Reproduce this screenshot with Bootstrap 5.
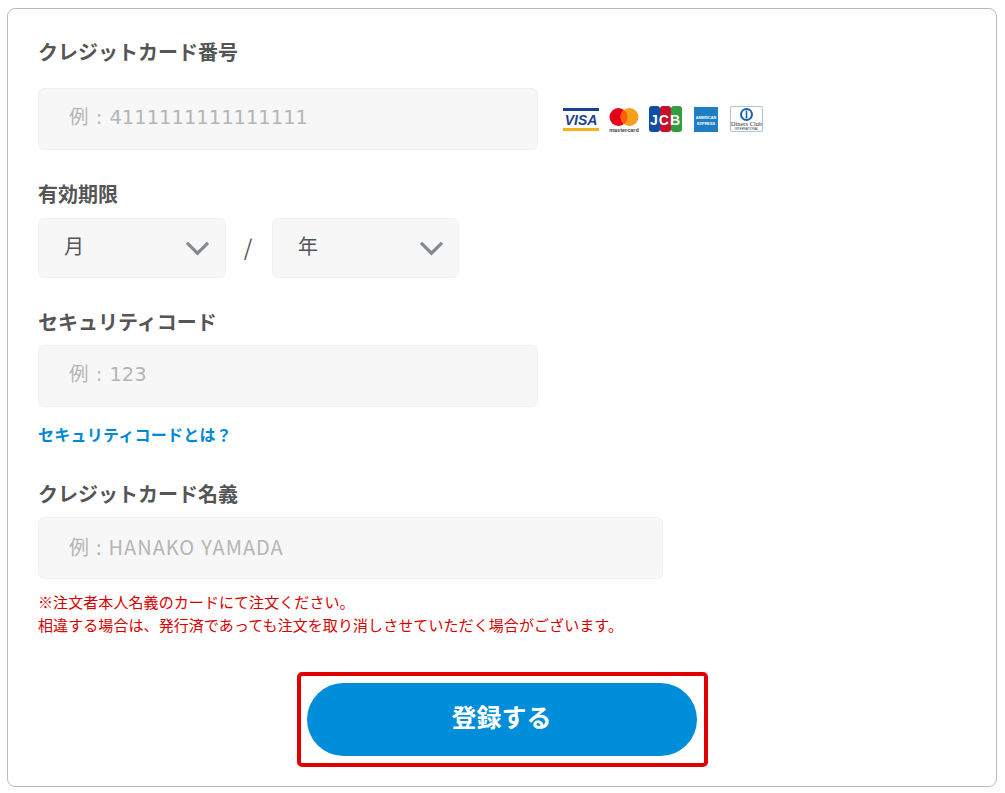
<!DOCTYPE html>
<html lang="ja">
<head>
  <meta charset="UTF-8">
  <title>クレジットカード登録</title>
  <link href="https://cdn.jsdelivr.net/npm/bootstrap@5.3.3/dist/css/bootstrap.min.css" rel="stylesheet">
  <style>
    body { background: #fff; font-family: "Noto Sans CJK JP", "Noto Sans", sans-serif; color: #555; }
    .pay-box { margin: 8px 8px 0 7px; width: 990px; height: 779px; border: 1px solid #bbb; border-radius: 8px; padding: 29px 30px 0; }
    .pay-label { font-size: 20px; font-weight: 700; color: #555; line-height: 28px; margin: 0; }
    .pay-input.form-control { background: #f7f7f7; border: 1px solid #f1f1f1; border-radius: 6px; height: 62px; padding: 0 30px 4px; font-size: 20px; letter-spacing: 1px; word-spacing: .5px; box-shadow: none; }
    .pay-input.form-control::placeholder { color: #b5b5b5; }
    .pay-input.num-field { font-family: "DejaVu Sans", "Noto Sans CJK JP", sans-serif; font-size: 19.5px; letter-spacing: 0; word-spacing: 1px; padding-bottom: 4px; }
    .w-short { width: 500px; }
    .w-long { width: 625px; }
    .pay-select.form-select { background-color: #f7f7f7; background-image: url("data:image/svg+xml,%3csvg xmlns='http://www.w3.org/2000/svg' viewBox='0 0 22 14'%3e%3cpath fill='none' stroke='%23808a90' stroke-width='3' d='M1 1.5l10 10 10-10'/%3e%3c/svg%3e"); background-size: 23px 15px; background-position: right 16px center; border: 1px solid #f1f1f1; border-radius: 6px; height: 60px; width: 188px; padding: 0 0 4px 25px; font-size: 20px; color: #555; box-shadow: none; }
    .pay-select.year-field { width: 187px; background-position: right 15px center; }
    .slash { width: 46px; font-size: 22px; line-height: 1; color: #555; text-align: center; padding-bottom: 4px; margin-left: -1px; margin-right: 1px; }
    .cards { margin-left: 25px; gap: 10px; }
    .cards .wide-gap { margin-left: 2px; }
    .help-link { font-size: 16px; font-weight: 700; color: #0088d4; text-decoration: none; line-height: 24px; letter-spacing: .25px; }
    .notes { font-size: 15px; line-height: 23px; color: #d60000; margin: 11px 0 0; letter-spacing: .08px; }
    .cta-frame { width: 411px; height: 95px; border: 4px solid #e00000; border-radius: 5px; padding: 7px 6px; margin: 36px auto 0; }
    .cta-btn { width: 390px; height: 73px; border: 0; border-radius: 37px; background: #008dd9; color: #fff; font-size: 25px; font-weight: 700; padding: 0 0 5px; }
    .cta-btn:hover { background: #008dd9; color: #fff; }
  </style>
</head>
<body>

<div class="pay-box">
  <p class="pay-label">クレジットカード番号</p>
  <div class="d-flex align-items-center" style="margin-top:22px">
    <input type="text" class="form-control pay-input num-field w-short" placeholder="例 : 4111111111111111">
    <div class="d-flex align-items-center cards">
      <svg width="36" height="24" viewBox="0 0 36 24">
        <rect y="1" width="36" height="3" fill="#1a3f8f"/>
        <rect y="21" width="36" height="3" fill="#f3b31c"/>
        <text x="18" y="17.500" text-anchor="middle" font-family="Liberation Sans" font-weight="700" font-style="italic" font-size="14" fill="#1a3f8f">VISA</text>
      </svg>
      <svg width="30" height="26" viewBox="0 0 30 26">
        <circle cx="9.500" cy="11" r="9" fill="#e3001b"/>
        <circle cx="20.500" cy="11" r="9" fill="#f79e1b"/>
        <path d="M15 3.900a9 9 0 0 1 0 14.200a9 9 0 0 1 0-14.200z" fill="#ff5f00"/>
        <text x="15" y="25.500" text-anchor="middle" font-family="Liberation Sans" font-weight="700" font-size="5.500" fill="#444">mastercard</text>
      </svg>
      <svg width="33" height="26" viewBox="0 0 33 26">
        <rect x="0" width="11" height="26" rx="3" fill="#0b4ea2"/>
        <rect x="11" width="11" height="26" rx="3" fill="#c8102e"/>
        <rect x="22" width="11" height="26" rx="3" fill="#2e9e3f"/>
        <text x="16.500" y="19" text-anchor="middle" font-family="Liberation Sans" font-weight="700" font-size="14" fill="#fff" letter-spacing="1">JCB</text>
      </svg>
      <svg class="wide-gap" width="24" height="25" viewBox="0 0 24 25">
        <rect width="24" height="25" fill="#1f7fc4"/>
        <text x="12" y="11.500" text-anchor="middle" font-family="Liberation Sans" font-weight="700" font-size="3.800" fill="#fff">AMERICAN</text>
        <text x="12" y="17.500" text-anchor="middle" font-family="Liberation Sans" font-weight="700" font-size="3.800" fill="#fff">EXPRESS</text>
      </svg>
      <svg class="wide-gap" width="33" height="26" viewBox="0 0 33 26">
        <rect x=".5" y=".5" width="32" height="25" rx="1.500" fill="#fff" stroke="#a9c4dc"/>
        <circle cx="16.500" cy="8.500" r="6.500" fill="#1b5fa8"/>
        <circle cx="16.500" cy="8.500" r="4.500" fill="#fff"/>
        <rect x="15.700" y="4.500" width="1.600" height="8" fill="#1b5fa8"/>
        <text x="16.500" y="20" text-anchor="middle" font-family="Liberation Serif" font-size="6.500" fill="#333">Diners Club</text>
        <text x="16.500" y="24" text-anchor="middle" font-family="Liberation Sans" font-size="3" fill="#333">INTERNATIONAL</text>
      </svg>
    </div>
  </div>

  <p class="pay-label" style="margin-top:30px">有効期限</p>
  <div class="d-flex align-items-center" style="margin-top:10px">
    <select class="form-select pay-select"><option>月</option></select>
    <span class="slash">/</span>
    <select class="form-select pay-select year-field"><option>年</option></select>
  </div>

  <p class="pay-label" style="margin-top:30px">セキュリティコード</p>
  <input type="text" class="form-control pay-input num-field w-short" style="margin-top:9px" placeholder="例 : 123">
  <a href="#" class="help-link d-block" style="margin-top:15px">セキュリティコードとは？</a>

  <p class="pay-label" style="margin-top:34px">クレジットカード名義</p>
  <input type="text" class="form-control pay-input w-long" style="margin-top:9px" placeholder="例 : HANAKO YAMADA">
  <p class="notes">※注文者本人名義のカードにて注文ください。<br>相違する場合は、発行済であっても注文を取り消しさせていただく場合がございます。</p>

  <div class="cta-frame">
    <button type="button" class="btn cta-btn">登録する</button>
  </div>
</div>

</body>
</html>
